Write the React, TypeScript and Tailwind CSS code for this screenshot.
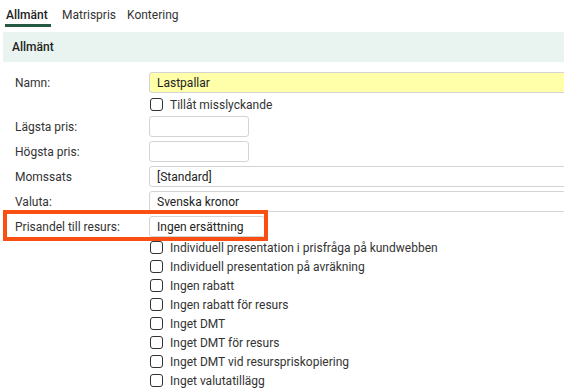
import React from "react"

const CHECKS = [
    "Individuell presentation i prisfråga på kundwebben",
    "Individuell presentation på avräkning",
    "Ingen rabatt",
    "Ingen rabatt för resurs",
    "Inget DMT",
    "Inget DMT för resurs",
    "Inget DMT vid resurspriskopiering",
    "Inget valutatillägg",
]

function Box() {
    return <span className="w-[13px] h-[13px] shrink-0 rounded-[3px] border border-[#333] bg-white" />
}

function CheckRow({ label }: { label: string }) {
    return (
        <div className="flex items-center h-[19px] pl-[150px] gap-[7px]">
            <Box />
            <span className="text-[#333]">{label}</span>
        </div>
    )
}

function Field({ label, value, w, yellow }: { label: string; value?: string; w: string; yellow?: boolean }) {
    return (
        <div className="flex items-center h-[21px]">
            <div className="w-[149px] shrink-0 pl-[15px] text-[#333]">{label}</div>
            <div
                className={`${w} h-[21px] shrink-0 rounded-[3px] border border-[#d4d4d4] px-[7px] flex items-center text-[#222] ${
                    yellow ? "bg-[#ffffaa]" : "bg-white"
                }`}
            >
                {value}
            </div>
        </div>
    )
}

export default function App() {
    return (
        <div className="relative w-[564px] h-[391px] overflow-hidden bg-white text-[12px] leading-none" style={{ fontFamily: "Roboto, 'Liberation Sans', sans-serif" }}>
            {/* Tabs */}
            <div className="flex items-end h-[27px] pl-[5px]">
                <div className="w-[46px] h-[27px] pl-px pt-[9px] border-b-[3px] border-[#245a43] font-medium text-[#222]">Allmänt</div>
                <div className="ml-[11px] h-[27px] pt-[9px] text-[#333]">Matrispris</div>
                <div className="ml-[11px] h-[27px] pt-[9px] text-[#333]">Kontering</div>
            </div>

            {/* Section header */}
            <div className="mt-[5px] ml-[3px] h-[30px] bg-[#e9f3ef] pl-[9px] flex items-center font-medium text-[#222]">Allmänt</div>

            <div className="pt-[10px]">
                <Field label="Namn:" value="Lastpallar" w="w-[440px]" yellow />
                <div className="mt-[2px]">
                    <CheckRow label="Tillåt misslyckande" />
                </div>
                <div className="mt-[2px] flex flex-col gap-[4px]">
                    <Field label="Lägsta pris:" w="w-[100px]" />
                    <Field label="Högsta pris:" w="w-[100px]" />
                    <Field label="Momssats" value="[Standard]" w="w-[440px]" />
                    <Field label="Valuta:" value="Svenska kronor" w="w-[440px]" />
                    <Field label="Prisandel till resurs:" value="Ingen ersättning" w="w-[116px]" />
                </div>
                <div className="mt-px">
                    {CHECKS.map((c) => (
                        <CheckRow key={c} label={c} />
                    ))}
                </div>
            </div>

            {/* Highlight frame */}
            <div className="absolute left-[3px] top-[210px] w-[265px] h-[31px] border-4 border-[#fa4f12]" />
        </div>
    )
}
